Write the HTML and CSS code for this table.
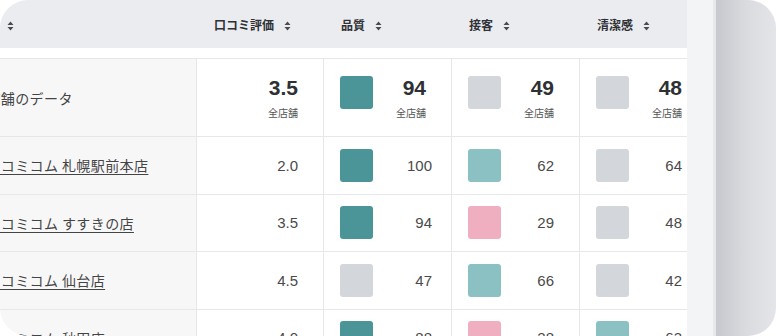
FILE: index.html
```html
<!DOCTYPE html>
<html lang="ja">
<head>
    <meta charset="UTF-8">
    <meta name="viewport" content="width=device-width, initial-scale=1.0">
    <title>店舗別スコア</title>
    <link rel="stylesheet" href="styles.css">
</head>
<body>
    <div class="frame">
        <div class="table-wrap">
            <table class="ranking">
                <colgroup>
                    <col class="col-name">
                    <col class="col-rating">
                    <col class="col-score">
                    <col class="col-score">
                    <col class="col-score">
                </colgroup>
                <thead>
                    <tr>
                        <th class="th-name">店舗名<svg class="sort" viewBox="0 0 7 10"><path d="M3.5 0.5 L6.5 4 L0.5 4 Z M0.5 6 L6.5 6 L3.5 9.5 Z"/></svg></th>
                        <th>口コミ評価<svg class="sort" viewBox="0 0 7 10"><path d="M3.5 0.5 L6.5 4 L0.5 4 Z M0.5 6 L6.5 6 L3.5 9.5 Z"/></svg></th>
                        <th>品質<svg class="sort" viewBox="0 0 7 10"><path d="M3.5 0.5 L6.5 4 L0.5 4 Z M0.5 6 L6.5 6 L3.5 9.5 Z"/></svg></th>
                        <th>接客<svg class="sort" viewBox="0 0 7 10"><path d="M3.5 0.5 L6.5 4 L0.5 4 Z M0.5 6 L6.5 6 L3.5 9.5 Z"/></svg></th>
                        <th>清潔感<svg class="sort" viewBox="0 0 7 10"><path d="M3.5 0.5 L6.5 4 L0.5 4 Z M0.5 6 L6.5 6 L3.5 9.5 Z"/></svg></th>
                    </tr>
                </thead>
                <tbody>
                    <tr class="summary">
                        <td class="name">全店舗のデータ</td>
                        <td><div class="score score-only"><div class="total"><span class="num">3.5</span><span class="label">全店舗</span></div></div></td>
                        <td class="quality"><div class="score"><span class="chip chip-high"></span><div class="total"><span class="num">94</span><span class="label">全店舗</span></div></div></td>
                        <td><div class="score"><span class="chip chip-mid"></span><div class="total"><span class="num">49</span><span class="label">全店舗</span></div></div></td>
                        <td><div class="score"><span class="chip chip-mid"></span><div class="total"><span class="num">48</span><span class="label">全店舗</span></div></div></td>
                    </tr>
                    <tr>
                        <td class="name"><a href="#">クチコミコム 札幌駅前本店</a></td>
                        <td><div class="score score-only"><span class="num">2.0</span></div></td>
                        <td class="quality"><div class="score"><span class="chip chip-high"></span><span class="num">100</span></div></td>
                        <td><div class="score"><span class="chip chip-good"></span><span class="num">62</span></div></td>
                        <td><div class="score"><span class="chip chip-mid"></span><span class="num">64</span></div></td>
                    </tr>
                    <tr>
                        <td class="name"><a href="#">クチコミコム すすきの店</a></td>
                        <td><div class="score score-only"><span class="num">3.5</span></div></td>
                        <td class="quality"><div class="score"><span class="chip chip-high"></span><span class="num">94</span></div></td>
                        <td><div class="score"><span class="chip chip-low"></span><span class="num">29</span></div></td>
                        <td><div class="score"><span class="chip chip-mid"></span><span class="num">48</span></div></td>
                    </tr>
                    <tr>
                        <td class="name"><a href="#">クチコミコム 仙台店</a></td>
                        <td><div class="score score-only"><span class="num">4.5</span></div></td>
                        <td class="quality"><div class="score"><span class="chip chip-mid"></span><span class="num">47</span></div></td>
                        <td><div class="score"><span class="chip chip-good"></span><span class="num">66</span></div></td>
                        <td><div class="score"><span class="chip chip-mid"></span><span class="num">42</span></div></td>
                    </tr>
                    <tr>
                        <td class="name"><a href="#">クチコミコム 秋田店</a></td>
                        <td><div class="score score-only"><span class="num">4.0</span></div></td>
                        <td class="quality"><div class="score"><span class="chip chip-high"></span><span class="num">88</span></div></td>
                        <td><div class="score"><span class="chip chip-low"></span><span class="num">28</span></div></td>
                        <td><div class="score"><span class="chip chip-good"></span><span class="num">63</span></div></td>
                    </tr>
                </tbody>
            </table>
        </div>
        <div class="gutter"></div>
        <div class="side"></div>
    </div>
</body>
</html>
```

FILE: styles.css
```css
body {
    margin: 0;
    background: #fff;
    font-family: "Noto Sans CJK JP", "Noto Sans", sans-serif;
}
.frame {
    display: flex;
    width: 776px;
    height: 336px;
    border-radius: 28px;
    overflow: hidden;
}
.table-wrap {
    width: 687px;
    flex-shrink: 0;
    overflow: hidden;
}
.gutter {
    width: 26px;
    flex-shrink: 0;
    background: #f3f4f6;
    border-right: 3px solid #e7e8eb;
}
.side {
    flex: 1;
    background: linear-gradient(to right, #c6c8cd, #d9dbdf 50%, #e3e5e8);
}
.ranking {
    border-collapse: separate;
    border-spacing: 0;
    table-layout: fixed;
    width: 767px;
    margin-left: -60px;
}
.col-name {
    width: 256px;
}
.col-rating {
    width: 127px;
}
.col-score {
    width: 128px;
}
.ranking th {
    box-sizing: border-box;
    height: 58px;
    padding: 0 0 0 18px;
    background: #ebecf0;
    border-bottom: 10px solid #fff;
    text-align: left;
    font-size: 12px;
    font-weight: bold;
    color: #2f3136;
    white-space: nowrap;
}
.ranking .th-name {
    padding-left: 21px;
}
.sort {
    width: 7px;
    height: 10px;
    margin-left: 10px;
    vertical-align: -1px;
    fill: #4a4c50;
}
.ranking td {
    box-sizing: border-box;
    height: 57.5px;
    padding: 0 25px 0 16px;
    border-top: 1px solid #e6e7eb;
    border-left: 1px solid #e6e7eb;
    white-space: nowrap;
}
.ranking td.name {
    padding-left: 32px;
    border-left: none;
    background: #f7f7f8;
    font-size: 14px;
    letter-spacing: 0.4px;
    color: #444;
}
.name a {
    color: #444;
    text-decoration: underline;
    text-underline-offset: 3px;
}
.ranking td.quality {
    padding-right: 19px;
}
.summary td.quality {
    padding-right: 25px;
}
.ranking .summary td {
    height: 78px;
}
.score {
    display: flex;
    align-items: center;
    justify-content: space-between;
}
.score-only {
    justify-content: flex-end;
}
.summary .score {
    align-items: flex-start;
}
.chip {
    width: 33px;
    height: 33px;
    border-radius: 3px;
    flex-shrink: 0;
}
.chip-high {
    background: #4b9599;
}
.chip-good {
    background: #8bc1c2;
}
.chip-mid {
    background: #d3d6db;
}
.chip-low {
    background: #f0aec1;
}
.num {
    font-family: "Liberation Sans", Arial, sans-serif;
    font-size: 15px;
    color: #4a4a4a;
}
.total {
    display: flex;
    flex-direction: column;
    align-items: flex-end;
}
.summary .num {
    font-size: 21px;
    line-height: 24px;
    font-weight: bold;
    color: #2e3033;
}
.label {
    margin-top: 6px;
    font-size: 10px;
    line-height: 14px;
    color: #555;
}
```
